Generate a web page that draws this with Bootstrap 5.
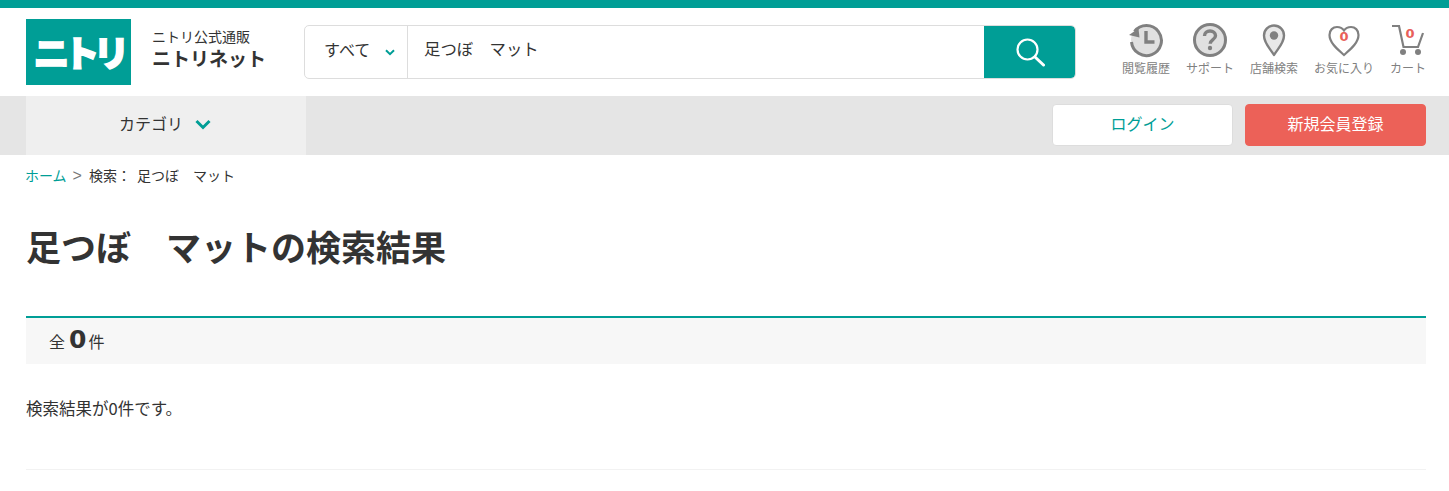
<!DOCTYPE html>
<html lang="ja">
<head>
    <meta charset="UTF-8">
    <meta name="viewport" content="width=device-width, initial-scale=1.0">
    <title>足つぼ マットの検索結果 | ニトリネット</title>
    <link href="https://cdn.jsdelivr.net/npm/bootstrap@5.3.0/dist/css/bootstrap.min.css" rel="stylesheet">
    <style>
        body {
            font-family: "Noto Sans CJK JP", "Liberation Sans", sans-serif;
            color: #333;
            font-size: 16px;
            background: #fff;
        }
        .top-strip { height: 8px; background: #009e96; }
        .site-header { height: 88px; padding: 11px 23px 0 26px; }
        .logo-box {
            width: 105px; height: 66px;
            background: #009e96; color: #fff;
            font-size: 36px; font-weight: 900; line-height: 64px;
            letter-spacing: -6px; text-align: center;
            -webkit-text-stroke: 1.5px #fff;
        }
        .site-name { margin-left: 21px; width: 152px; }
        .site-sub { font-size: 14px; line-height: 20px; margin-top: 7px; }
        .site-main { font-size: 19px; line-height: 26px; font-weight: 700; margin-top: -1px; }
        .search-wrap {
            width: 772px; height: 54px; margin-top: 6px;
            border: 1px solid #ddd; border-radius: 5px; overflow: hidden;
        }
        .search-cat {
            width: 103px; flex: 0 0 103px; padding: 0 0 6px 19px;
            border-right: 1px solid #ddd; font-size: 16px; gap: 15px; white-space: nowrap;
        }
        .search-cat svg { margin-top: 7px; }
        .search-input {
            min-width: 0; border: 0; border-radius: 0; padding: 0 16px 7px;
            font-size: 16.4px; color: #333; box-shadow: none;
        }
        .search-go {
            width: 91px; flex: 0 0 91px; border: 0; border-radius: 0 4px 4px 0;
            background: #009e96; padding: 0;
        }
        .util-links { gap: 16px; margin-top: 3px; }
        .util-item { color: #808080; font-size: 12px; line-height: 16px; text-decoration: none; text-align: center; white-space: nowrap; }
        .util-item svg { display: block; margin: 0 auto; }
        .util-icon { height: 38px; position: relative; }
        .util-num {
            position: absolute; left: 0; right: 0; top: 7px;
            color: #e8605a; font-family: "DejaVu Sans", sans-serif; font-size: 13px; line-height: 16px; font-weight: 700;
        }
        .util-num-cart { left: 4px; top: 4px; }
        .sub-nav { height: 59px; background: #e5e5e5; padding: 0 23px 0 26px; }
        .cat-tab { width: 280px; background: #efefef; font-size: 16px; gap: 12px; padding: 0 2px 5px 0; }
        .cat-tab svg { margin-top: 3px; }
        .nav-btn { width: 181px; height: 42px; margin-top: 8px; font-size: 16px; padding: 0; line-height: 37px; border-radius: 4px; }
        .btn-login { background: #fff; border: 1px solid #ddd; color: #009e96; margin-right: 12px; }
        .btn-register { background: #ec6158; border: 1px solid #ec6158; color: #fff; }
        .crumbs { padding: 10px 25px 0; font-size: 14px; line-height: 20px; height: 42px; }
        .crumbs a { color: #009e96; text-decoration: none; }
        .crumb-sep { color: #777; margin: 0 7px 0 6px; font-family: "Liberation Sans", sans-serif; font-size: 16px; }
        .crumb-query { margin-left: 6px; }
        .result-title { font-size: 35px; font-weight: 700; line-height: 50px; margin: 24px 26px 45px; color: #333; }
        .count-bar {
            margin: 0 23px 0 26px; height: 48px; padding-left: 23px;
            border-top: 2px solid #009e96; background: #f7f7f7;
        }
        .count-num { font-family: "DejaVu Sans", sans-serif; font-size: 25px; font-weight: 700; margin: 0 2px 3px 4px; line-height: 1; }
        .empty-msg { margin: 32px 26px 49px; line-height: 24px; font-size: 16.5px; }
        .end-rule { margin: 0 23px 0 26px; border: 0; border-top: 1px solid #f2f2f2; opacity: 1; }
    </style>
</head>
<body>
    <div class="top-strip"></div>

    <header class="site-header d-flex">
        <div class="logo-box">ニトリ</div>
        <div class="site-name">
            <div class="site-sub">ニトリ公式通販</div>
            <div class="site-main">ニトリネット</div>
        </div>
        <form class="search-wrap d-flex">
            <div class="search-cat d-flex align-items-center">
                <span>すべて</span>
                <svg width="10" height="7" viewBox="0 0 10 7"><path d="M1 1.2l4 4 4-4" fill="none" stroke="#009e96" stroke-width="2"/></svg>
            </div>
            <input type="text" class="form-control search-input flex-grow-1" value="足つぼ　マット">
            <button type="button" class="btn search-go d-flex align-items-center justify-content-center" aria-label="検索">
                <svg width="30" height="30" viewBox="0 0 30 30"><circle cx="12.5" cy="12.5" r="10" fill="none" stroke="#fff" stroke-width="2.2"/><path d="M20 20l8.500 8" stroke="#fff" stroke-width="3" stroke-linecap="round"/></svg>
            </button>
        </form>
        <nav class="util-links d-flex ms-auto">
            <a class="util-item" href="#">
                <div class="util-icon">
                    <svg width="36" height="36" viewBox="0 0 36 36">
                        <circle cx="18" cy="18" r="15" fill="#e0e0e0"/>
                        <path d="M6.500 9.500A15 15 0 1 1 3.500 20" fill="none" stroke="#808080" stroke-width="3"/>
                        <path d="M1 13l9.500-6.500 1 9z" fill="#808080"/>
                        <path d="M18 9v11h8.500" fill="none" stroke="#808080" stroke-width="3.400"/>
                    </svg>
                </div>
                閲覧履歴
            </a>
            <a class="util-item" href="#">
                <div class="util-icon">
                    <svg width="36" height="36" viewBox="0 0 36 36">
                        <circle cx="18" cy="18" r="15.500" fill="#e0e0e0" stroke="#808080" stroke-width="3"/>
                        <path d="M12.500 14c0-3.200 2.500-5 5.500-5s5.500 1.800 5.500 4.700c0 4-5.300 3.700-5.300 8" fill="none" stroke="#808080" stroke-width="3.400"/>
                        <circle cx="18" cy="26" r="2.200" fill="#808080"/>
                    </svg>
                </div>
                サポート
            </a>
            <a class="util-item" href="#">
                <div class="util-icon">
                    <svg width="26" height="36" viewBox="0 0 26 36">
                        <path d="M13 33C9.500 27 3 21.500 3 13.500a10 10 0 0 1 20 0C23 21.500 16.500 27 13 33z" fill="#e8e8e8" stroke="#808080" stroke-width="2.400" stroke-linejoin="round"/>
                        <circle cx="13" cy="13.500" r="4.200" fill="#808080"/>
                    </svg>
                </div>
                店舗検索
            </a>
            <a class="util-item" href="#">
                <div class="util-icon">
                    <svg width="32" height="36" viewBox="0 0 32 36">
                        <path d="M16 33C10 27.500 1.500 21 1.500 13 1.500 8 5 5 9 5c3 0 5.500 1.300 7 3.500C17.500 6.300 20 5 23 5c4 0 7.500 3 7.500 8C30.500 21 22 27.500 16 33z" fill="#fff" stroke="#808080" stroke-width="2.200"/>
                    </svg>
                    <span class="util-num">0</span>
                </div>
                お気に入り
            </a>
            <a class="util-item" href="#">
                <div class="util-icon">
                    <svg width="36" height="36" viewBox="0 0 36 36">
                        <path d="M2 4h7l4.500 21h14.500l5-14" fill="none" stroke="#808080" stroke-width="2.200"/>
                        <circle cx="13" cy="30" r="3" fill="#808080"/>
                        <circle cx="28" cy="30" r="3" fill="#808080"/>
                    </svg>
                    <span class="util-num util-num-cart">0</span>
                </div>
                カート
            </a>
        </nav>
    </header>

    <div class="sub-nav d-flex">
        <div class="cat-tab d-flex align-items-center justify-content-center">
            <span>カテゴリ</span>
            <svg width="16" height="11" viewBox="0 0 16 11"><path d="M1.500 2l6.500 6.500L14.500 2" fill="none" stroke="#009e96" stroke-width="3"/></svg>
        </div>
        <a class="btn nav-btn btn-login ms-auto" href="#">ログイン</a>
        <a class="btn nav-btn btn-register" href="#">新規会員登録</a>
    </div>

    <div class="crumbs"><a href="#">ホーム</a><span class="crumb-sep">&gt;</span>検索：<span class="crumb-query">足つぼ　マット</span></div>

    <h1 class="result-title">足つぼ　マットの検索結果</h1>

    <div class="count-bar d-flex align-items-center">全<span class="count-num">0</span>件</div>

    <p class="empty-msg">検索結果が0件です。</p>

    <hr class="end-rule">

    <script src="https://cdn.jsdelivr.net/npm/bootstrap@5.3.0/dist/js/bootstrap.bundle.min.js"></script>
</body>
</html>
